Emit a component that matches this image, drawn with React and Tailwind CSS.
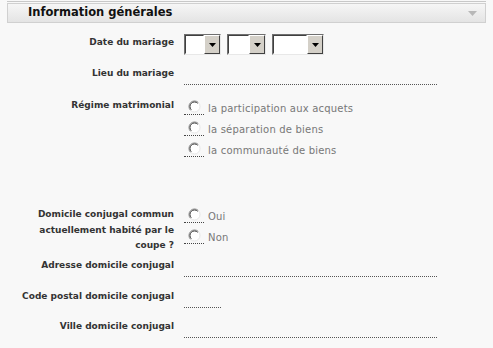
import React from "react";

const font = { fontFamily: '"DejaVu Sans", Verdana, sans-serif' };

function SelectBox({ width }) {
  return (
    <div
      className="flex h-[21px] border border-t-[#6f6f6f] border-l-[#6f6f6f] border-r-[#e8e8e8] border-b-[#e8e8e8] bg-white"
      style={{ width }}
    >
      <div className="flex-1 border border-t-[#404040] border-l-[#404040] border-r-transparent border-b-transparent" />
      <div className="flex h-[19px] w-[16px] items-center justify-center border border-t-[#fff] border-l-[#fff] border-r-[#404040] border-b-[#404040] bg-[#d4d0c8]">
        <svg width="7" height="4" viewBox="0 0 7 4">
          <path d="M0 0h7L3.5 4z" fill="#000" />
        </svg>
      </div>
    </div>
  );
}

function Radio({ label }) {
  return (
    <div className="flex h-[21px] items-center">
      <div className="flex h-[17px] w-[20px] items-center justify-center border-b border-dotted border-[#444]">
        <svg width="13" height="13" viewBox="0 0 13 13">
          <circle cx="6.5" cy="6.5" r="5.5" fill="#fff" />
          <path d="M10.4 2.6A5.5 5.5 0 0 0 2.6 10.4" fill="none" stroke="#808080" strokeWidth="1" />
          <path d="M9.7 3.3A4.5 4.5 0 0 0 3.3 9.7" fill="none" stroke="#404040" strokeWidth="1" />
          <path d="M2.6 10.4A5.5 5.5 0 0 0 10.4 2.6" fill="none" stroke="#e6e6e6" strokeWidth="1" />
        </svg>
      </div>
      <span className="ml-[4px] mt-[4px] text-[10px] tracking-[0.2px] text-[#777]">{label}</span>
    </div>
  );
}

function Label({ children, className = "" }) {
  return (
    <div className={`w-[174px] shrink-0 text-right text-[9px] font-bold leading-[12px] text-[#333] ${className}`}>
      {children}
    </div>
  );
}

function Line({ width, className = "" }) {
  return <div className={`h-[18px] border-b border-dotted border-[#555] ${className}`} style={{ width }} />;
}

export default function App() {
  return (
    <div className="h-[348px] w-[493px] overflow-hidden bg-[#f8f8f8]" style={font}>
      <div className="mx-[7px] h-[2px] border-b border-[#c8c8c8]" />
      <div className="mx-[7px] mt-[1px] flex h-[20px] items-center border border-[#d0d0d0] bg-gradient-to-b from-[#f6f6f6] to-[#e4e4e4] pl-[20px] pr-[8px]">
        <span className="flex-1 text-[11.5px] font-bold text-[#111]">Information générales</span>
        <svg width="9" height="5" viewBox="0 0 9 5">
          <path d="M0 0h9L4.5 5z" fill="#b8b8b8" />
        </svg>
      </div>

      <div className="mt-[10px] flex">
        <Label className="pt-[3px]">Date du mariage</Label>
        <div className="ml-[10px] mt-[1px] flex gap-[6px]">
          <SelectBox width={37} />
          <SelectBox width={39} />
          <SelectBox width={52} />
        </div>
      </div>

      <div className="mt-[12px] flex">
        <Label>Lieu du mariage</Label>
        <Line width={253} className="ml-[10px]" />
      </div>

      <div className="mt-[14px] flex">
        <Label>Régime matrimonial</Label>
        <div className="ml-[10px] -mt-[3px] flex flex-col">
          <Radio label="la participation aux acquets" />
          <Radio label="la séparation de biens" />
          <Radio label="la communauté de biens" />
        </div>
      </div>

      <div className="mt-[48px] flex">
        <Label className="leading-[15.5px]">
          Domicile conjugal commun
          <br />
          actuellement habité par le
          <br />
          coupe ?
        </Label>
        <div className="ml-[10px] -mt-[3px] flex flex-col">
          <Radio label="Oui" />
          <Radio label="Non" />
        </div>
      </div>

      <div className="mt-[5px] flex">
        <Label>Adresse domicile conjugal</Label>
        <Line width={253} className="ml-[10px] h-[12px]" />
      </div>

      <div className="mt-[13px] flex">
        <Label>Code postal domicile conjugal</Label>
        <Line width={37} className="ml-[10px] h-[12px]" />
      </div>

      <div className="mt-[12px] flex">
        <Label>Ville domicile conjugal</Label>
        <Line width={253} className="ml-[10px] h-[11px]" />
      </div>

      <div className="mx-[7px] mt-[13px] border-b-2 border-[#c8c8c8]" />
    </div>
  );
}
